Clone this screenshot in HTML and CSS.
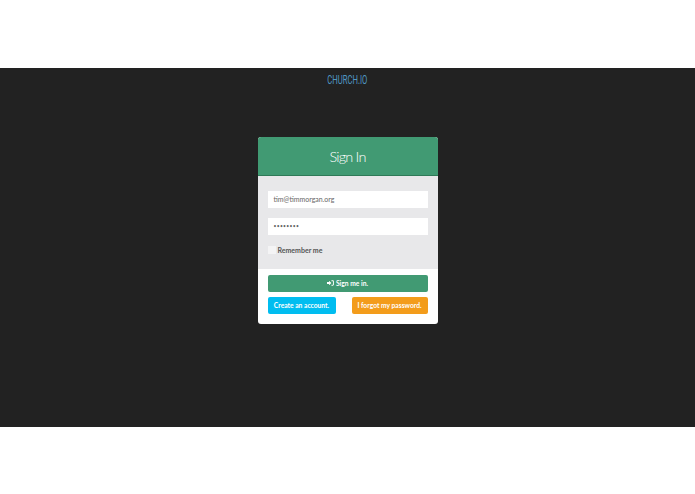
FILE: index.html
```html
<!DOCTYPE html>
<html lang="en">
<head>
<meta charset="utf-8">
<title>Sign In</title>
<link rel="stylesheet" href="styles.css">
</head>
<body>
<main class="stage">
  <a class="brand" href="#">CHURCH.IO</a>
  <form class="card">
    <h1 class="card-head">Sign In</h1>
    <div class="card-body">
      <div class="field">tim@timmorgan.org</div>
      <div class="field field-pass">••••••••</div>
      <label class="remember"><span class="check"></span>Remember me</label>
    </div>
    <div class="card-foot">
      <a class="btn btn-green" href="#"><svg class="icon" viewBox="0 0 12 10" aria-hidden="true"><path d="M0 3.4h3.4V1L7.6 5 3.4 9V6.6H0z"/><path d="M7.6 .4h2.2c1.2 0 2 .8 2 2v5.2c0 1.2-.8 2-2 2H7.6V8.2h2c.4 0 .6-.2.6-.6V2.4c0-.4-.2-.6-.6-.6h-2z"/></svg> Sign me in.</a>
      <div class="btn-row">
        <a class="btn btn-blue" href="#">Create an account.</a>
        <a class="btn btn-orange" href="#">I forgot my password.</a>
      </div>
    </div>
  </form>
</main>
</body>
</html>
```
FILE: styles.css
```css
* { box-sizing: border-box; }
html, body { margin: 0; padding: 0; background: #fff; }
body { padding-top: 68px; height: 494px; overflow: hidden; font-family: "Lato", "Open Sans", sans-serif; }
.stage { height: 359px; background: #222; display: flex; flex-direction: column; align-items: center; }
.brand { margin-top: 5px; height: 14px; line-height: 14px; font-family: "Roboto", sans-serif; font-size: 12px; font-weight: 400; color: #4f97c2; text-decoration: none; transform: scaleX(.64); }
.card { margin-top: 50px; width: 180px; height: 187px; background: #fff; border-radius: 3px; overflow: hidden; display: flex; flex-direction: column; }
.card-head { margin: 0; height: 39px; background: #419a73; border-bottom: 1px solid #2f7a58; color: #fff; font-family: "Lato", sans-serif; font-weight: 300; font-size: 14.5px; letter-spacing: -.8px; line-height: 39px; text-align: center; }
.card-body { height: 93px; background: #e8e8ea; padding: 15px 10px 0; display: flex; flex-direction: column; }
.field { height: 17px; background: #fff; padding-left: 6px; font-size: 7px; line-height: 17px; color: #666; }
.field-pass { margin-top: 10px; font-size: 5px; letter-spacing: .3px; }
.remember { margin-top: 10px; display: flex; align-items: center; gap: 2px; font-size: 7px; font-weight: 700; color: #555; line-height: 10px; }
.check { width: 8px; height: 8px; background: #f4f4f5; display: block; }
.card-foot { flex: 1; padding: 6px 10px 0; display: flex; flex-direction: column; gap: 5px; }
.btn { height: 17px; padding-bottom: 1px; display: flex; align-items: center; justify-content: center; gap: 2px; border-radius: 2px; color: #fff; font-size: 6.7px; font-weight: 700; text-decoration: none; white-space: nowrap; }
.btn-green { background: #419a73; }
.btn-row { display: flex; justify-content: space-between; }
.btn-blue { width: 68px; background: #00bdf0; }
.btn-orange { width: 76px; background: #f39c1b; }
.icon { width: 7px; height: 6px; fill: #fff; }
```
